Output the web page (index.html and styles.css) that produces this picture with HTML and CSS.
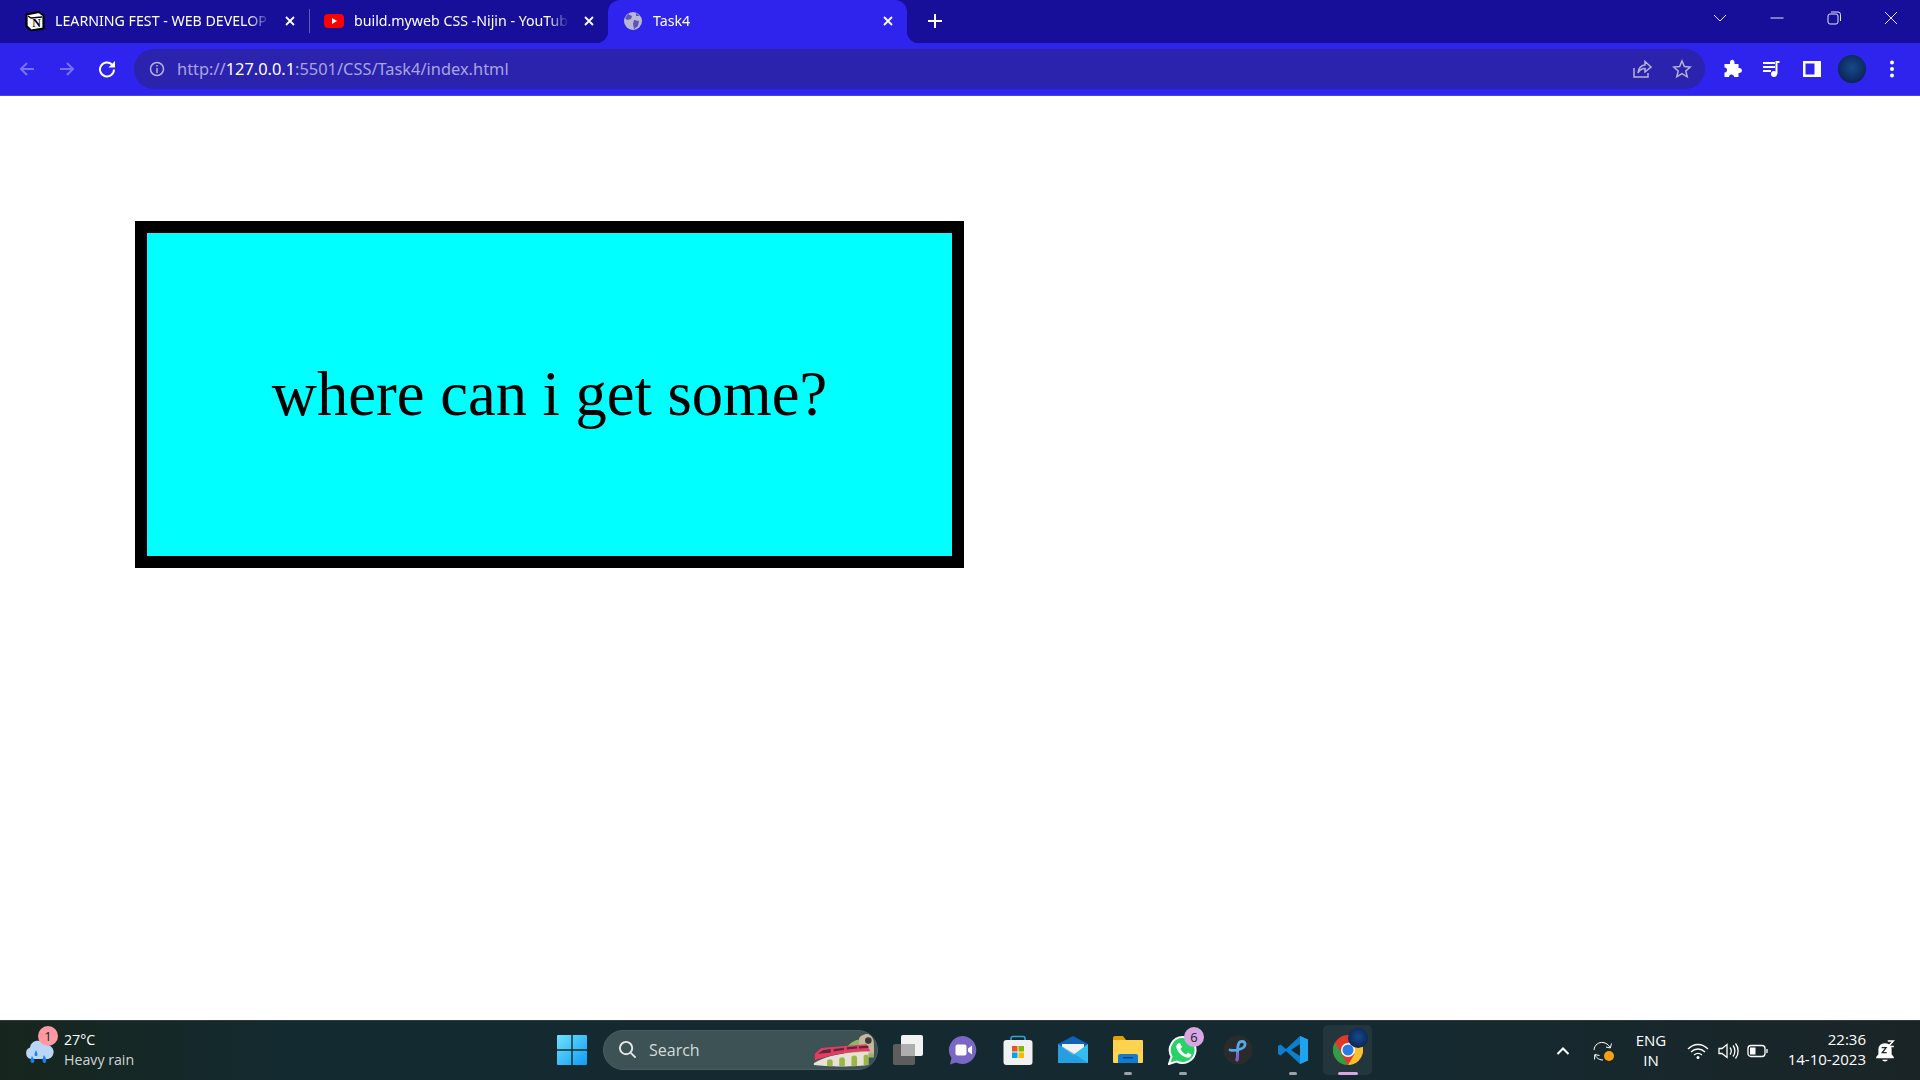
FILE: index.html
```html
<!DOCTYPE html>
<html lang="en">
<head>
    <meta charset="UTF-8">
    <title>Task4</title>
    <link rel="stylesheet" href="styles.css">
</head>
<body>
    <div class="tabstrip">
        <div class="tab">
            <svg class="favicon" viewBox="0 0 20 20"><path d="M1.500 3.500 14 1 18.500 4.500V17.500L6 19.500 1.500 15Z" fill="#fff" stroke="#000" stroke-width="2.200" stroke-linejoin="round"/><path d="M3 5 6 7 17 6" fill="none" stroke="#000" stroke-width="1.300"/><text class="notion-n" x="11.500" y="16" text-anchor="middle">N</text></svg>
            <span class="tab-title">LEARNING FEST - WEB DEVELOP</span>
            <svg class="tab-close" viewBox="0 0 12 12"><path d="M2 2 10 10M10 2 2 10"/></svg>
        </div>
        <div class="tab tab-sep">
            <svg class="favicon" viewBox="0 0 20 20"><rect x="0" y="3" width="20" height="14" rx="4" fill="#f00"/><path d="M8 7 13 10 8 13Z" fill="#fff"/></svg>
            <span class="tab-title">build.myweb CSS -Nijin - YouTub</span>
            <svg class="tab-close" viewBox="0 0 12 12"><path d="M2 2 10 10M10 2 2 10"/></svg>
        </div>
        <div class="tab active">
            <svg class="favicon" viewBox="0 0 20 20"><circle cx="10" cy="10" r="9" fill="#b9b7d6"/><path d="M5 3 9 5 8 8 4 9 2 7ZM11 9 16 10 15 15 11 18 10 13ZM13 2 17 5 13 5Z" fill="#5b55b8"/></svg>
            <span class="tab-title">Task4</span>
            <svg class="tab-close" viewBox="0 0 12 12"><path d="M2 2 10 10M10 2 2 10"/></svg>
        </div>
        <svg class="new-tab" viewBox="0 0 16 16"><path d="M8 1V15M1 8H15"/></svg>
        <div class="window-controls">
            <svg class="win-btn" viewBox="0 0 16 16"><path d="M2 5 8 11 14 5"/></svg>
            <svg class="win-btn" viewBox="0 0 16 16"><path d="M1.500 8H14.500"/></svg>
            <svg class="win-btn" viewBox="0 0 16 16"><rect x="2" y="4" width="10" height="10" rx="2"/><path d="M5 2H12A2.500 2.500 0 0 1 14.500 4.500V11"/></svg>
            <svg class="win-btn" viewBox="0 0 16 16"><path d="M2 2 14 14M14 2 2 14"/></svg>
        </div>
    </div>

    <div class="toolbar">
        <svg class="nav-icon dim" viewBox="0 0 18 18"><path d="M16 9H3M9 3 3 9 9 15"/></svg>
        <svg class="nav-icon dim" viewBox="0 0 18 18"><path d="M2 9H15M9 3 15 9 9 15"/></svg>
        <svg class="nav-icon" viewBox="0 0 18 18"><path d="M16 9.500A7 7 0 1 1 13.900 4.500"/><path class="solid" d="M17 1V7.500H10.500Z"/></svg>
        <div class="omnibox">
            <svg class="info-icon" viewBox="0 0 16 16"><circle cx="8" cy="8" r="6.500"/><path d="M8 7V12M8 4V5.600"/></svg>
            <span class="url">http://<b>127.0.0.1</b>:5501/CSS/Task4/index.html</span>
            <svg class="omni-icon" viewBox="0 0 20 20"><path d="M2 9V18H16V14"/><path d="M6 14C6 9 10 6 13 6V2.500L19 8 13 13V9.500C10 9.500 7.500 11 6 14Z"/></svg>
            <svg class="omni-icon" viewBox="0 0 20 20"><path d="M10 2 12.400 7.500 18.300 8 13.800 12 15.200 17.800 10 14.700 4.800 17.800 6.200 12 1.700 8 7.600 7.500Z"/></svg>
        </div>
        <div class="toolbar-actions">
            <svg class="tool-icon" viewBox="0 0 20 20"><path class="solid" d="M8 2.500A2.300 2.300 0 0 1 12.500 3V5H16.500V9H17.500A2.400 2.400 0 0 1 17.500 14H16.500V18H12A2.500 2.500 0 0 0 7 18H2.500V13.500A2.500 2.500 0 0 0 2.500 8.500V5H8Z"/></svg>
            <svg class="tool-icon" viewBox="0 0 20 20"><path d="M1 4H13M1 8H13M1 12H9"/><path d="M17.500 3H14.500V15"/><circle class="solid" cx="12" cy="15" r="3"/></svg>
            <svg class="tool-icon" viewBox="0 0 20 20"><path class="solid" fill-rule="evenodd" d="M1 2H19V18H1ZM3.500 4.500V15.500H12.500V4.500Z"/></svg>
            <div class="avatar"></div>
            <svg class="tool-icon" viewBox="0 0 20 20"><circle class="solid" cx="10" cy="3.500" r="2"/><circle class="solid" cx="10" cy="10" r="2"/><circle class="solid" cx="10" cy="16.500" r="2"/></svg>
        </div>
    </div>

    <main class="page">
        <div class="box">where can i get some?</div>
    </main>

    <div class="taskbar">
        <div class="weather">
            <div class="weather-icon">
                <svg viewBox="0 0 32 32"><path d="M8 24A6 6 0 0 1 7 12.500 8 8 0 0 1 22 10 7 7 0 0 1 25 24Z" fill="#b9d6f7"/><path d="M13 15C11 19 11 21 13 21 15 21 15 19 13 15ZM9 21C7 25 7 28 9.500 28 12 28 12 25 9 21ZM21 20C19 24 19 28 21.500 28 24 28 24 24 21 20Z" fill="#1d83f0"/></svg>
                <span class="weather-badge">1</span>
            </div>
            <div class="weather-text">
                <span class="temp">27°C</span>
                <span class="cond">Heavy rain</span>
            </div>
        </div>

        <div class="task-center">
            <div class="cell">
                <svg class="app" viewBox="0 0 30 30"><defs><linearGradient id="win" x1="0" y1="0" x2="1" y2="1"><stop offset="0" stop-color="#6fe3fb"/><stop offset="1" stop-color="#0f9bf5"/></linearGradient></defs><path d="M0 1A1 1 0 0 1 1 0H14.300V14.300H0ZM15.700 0H29A1 1 0 0 1 30 1V14.300H15.700ZM0 15.700H14.300V30H1A1 1 0 0 1 0 29ZM15.700 15.700H30V29A1 1 0 0 1 29 30H15.700Z" fill="url(#win)"/></svg>
            </div>
            <div class="search">
                <svg class="search-icon" viewBox="0 0 20 20"><circle cx="8.500" cy="8.500" r="6.500"/><path d="M13.500 13.500 18.500 18.500"/></svg>
                <span class="search-text">Search</span>
                <svg class="search-art" viewBox="0 0 66 36"><path d="M34 20C40 8 50 6 52 7L58 1C63 0 66 6 66 14V26H34Z" fill="#8fb56a"/><path d="M50 22V6C52 1 60 0 63 2 66 6 66 12 66 22Z" fill="#c9b49e"/><circle cx="60" cy="8" r="3.500" fill="#3a3a3a"/><path d="M2 32C10 26 30 20 60 20V34C50 36 14 36 2 34Z" fill="#e6e2d8"/><path d="M3 22 10 16 58 12 62 19C42 19 20 23 3 29Z" fill="#e63c64"/><path d="M6 22 12 18 20 17 20 21ZM23 17 34 15.500 34 18 23 19.500ZM37 15 48 14 48 16.500 37 17.500ZM50 14 60 13.500 60 16 50 16.500Z" fill="#5b2a3c"/><path d="M16 35V30C16 27 22 27 22 30V35ZM29 35V28C29 25 35 25 35 28V35ZM42 35V26C42 23 48 23 48 26V35ZM55 34V25C55 22 60 22 60 25V34Z" fill="#9bb546"/></svg>
            </div>
            <div class="cell">
                <svg class="app" viewBox="0 0 30 30"><rect x="0" y="9" width="22" height="21" rx="2" fill="#5d5d5d"/><rect x="8" y="0" width="22" height="21" rx="2" fill="#f2f2f2"/><rect x="8" y="9" width="14" height="12" fill="#aeaeae"/></svg>
            </div>
            <div class="cell">
                <svg class="app" viewBox="0 0 30 30"><path d="M15 1A14 14 0 1 1 8 27.500L2 29.500 3.500 23A14 14 0 0 1 15 1Z" fill="#7a68c4"/><rect x="7.500" y="9.500" width="11" height="11" rx="2" fill="#fff"/><path d="M20 13.500 24 10.500V19.500L20 16.500Z" fill="#fff"/></svg>
            </div>
            <div class="cell">
                <svg class="app" viewBox="0 0 30 30"><path d="M8 7V3.500A2 2 0 0 1 10 1.500H20A2 2 0 0 1 22 3.500V7" fill="none" stroke="#28a8e0" stroke-width="1.500"/><rect x="0.500" y="5" width="29" height="25" rx="3" fill="#f1f1f1"/><rect x="9" y="11" width="5.500" height="5.500" fill="#f25022"/><rect x="15.500" y="11" width="5.500" height="5.500" fill="#7fba00"/><rect x="9" y="17.500" width="5.500" height="5.500" fill="#00a4ef"/><rect x="15.500" y="17.500" width="5.500" height="5.500" fill="#ffb900"/></svg>
            </div>
            <div class="cell">
                <svg class="app" viewBox="0 0 30 30"><path d="M0 9 15 1 30 9V28H0Z" fill="#0f62b5"/><path d="M4 9H26V17L15 22 4 17Z" fill="#f1f1f1"/><path d="M0 9 15 20 30 9V28H0Z" fill="#35bdf0"/><path d="M0 28 30 28 15 18 0 9Z" fill="#1a8bd8" opacity="0.600"/></svg>
            </div>
            <div class="cell">
                <svg class="app" viewBox="0 0 30 30"><path d="M0 3A2 2 0 0 1 2 1H10L13 5H0Z" fill="#e0a100"/><path d="M0 5H29A1 1 0 0 1 30 6V27A1 1 0 0 1 29 28H1A1 1 0 0 1 0 27Z" fill="#ffd34f"/><path d="M5 21A2 2 0 0 1 7 19H23A2 2 0 0 1 25 21V28H5Z" fill="#0f7cd0"/><rect x="10" y="22" width="10" height="1.500" fill="#073e78"/></svg>
                <span class="dot"></span>
            </div>
            <div class="cell">
                <svg class="app" viewBox="0 0 30 30"><path d="M15 2A13 13 0 1 1 8.500 26.500L1 29 3.500 21.500A13 13 0 0 1 15 2Z" fill="#25d366" stroke="#fff" stroke-width="2"/><path d="M10 8.500 12 8 14 12 12.500 14C14 17 16 18.500 18 19.500L20 17.500 23.500 19.500C23 22.500 20.500 23 18.500 22.500 13.500 21 9.500 17 8.500 13 8 11 8.500 9.500 10 8.500Z" fill="#fff"/></svg>
                <span class="app-badge">6</span>
                <span class="dot"></span>
            </div>
            <div class="cell">
                <svg class="app" viewBox="0 0 30 30"><circle cx="15" cy="15" r="14.500" fill="#2b2b2b"/><path d="M7 15C10 16 21 15 22 10 23 6 17 5 15.500 9 14 13 15 20 14 25" fill="none" stroke="#5aa6e6" stroke-width="2.800" stroke-linecap="round"/><path d="M14.800 19C14.700 21 14.500 23 14 25" fill="none" stroke="#8a5cd0" stroke-width="2.800" stroke-linecap="round"/></svg>
            </div>
            <div class="cell">
                <svg class="app" viewBox="0 0 30 30"><path d="M22 1 30 4.500V25.500L22 29 8 16 2.500 20.500 0 19V11L2.500 9.500 8 14ZM22 9 13 15 22 21Z" fill="#0d7fcc"/><path d="M22 1 30 4.500V25.500L22 29Z" fill="#20a3ee"/></svg>
                <span class="dot"></span>
            </div>
            <div class="cell cell-active">
                <svg class="app" viewBox="0 0 30 30"><circle cx="15" cy="15" r="15" fill="#e0392c"/><path d="M15 30A15 15 0 0 0 28 7.500H15L21.500 19Z" fill="#fbc02d"/><path d="M2 7.500 8.500 19 15 30A15 15 0 0 1 2 7.500Z" fill="#2f9e44"/><circle cx="15" cy="15" r="7" fill="#fff"/><circle cx="15" cy="15" r="5.500" fill="#2a7be8"/></svg>
                <span class="chrome-avatar"></span>
                <span class="bar"></span>
            </div>
        </div>

        <div class="tray">
            <svg class="caret" viewBox="0 0 14 10"><path d="M1.500 8 7 2.500 12.500 8"/></svg>
            <div class="sync">
                <svg viewBox="0 0 20 20"><path d="M1 9C1.500 3.500 6 1 10 1.500 13 2 15.500 3.500 17 6.500M18.500 2.500 17.300 7 13 6M2 14C4 18 7.500 19 10 19M1.500 18.500 1.800 13.500 6.500 14.500" fill="none" stroke="#fff" stroke-width="1"/></svg>
                <span class="sync-dot"></span>
            </div>
            <div class="lang">ENG<br>IN</div>
            <svg class="tray-icon" viewBox="0 0 22 18"><path d="M1 7C7 1 15 1 21 7M4 10C8 6 14 6 18 10M7 13C9.500 11 12.500 11 15 13"/><circle class="solid" cx="11" cy="15.500" r="1.500"/></svg>
            <svg class="tray-icon" viewBox="0 0 22 18"><path d="M2 6.500H5L10 2.500V15.500L5 11.500H2ZM13 5.500C14.500 7.500 14.500 10.500 13 12.500M16 3.500C18.500 6.500 18.500 11.500 16 14.500M18.500 1.500C22 5.500 22 12.500 18.500 16.500"/></svg>
            <svg class="tray-icon" viewBox="0 0 22 18"><rect x="1" y="3.500" width="17" height="11" rx="3"/><rect class="solid" x="3" y="5.500" width="5.500" height="7"/><path d="M20 7V11"/></svg>
            <div class="clock">22:36<br>14-10-2023</div>
            <svg class="bell" viewBox="0 0 20 20"><path class="solid" d="M10 3A5.500 5.500 0 0 0 4 8.500V13L2 15.500V16.500H18V15.500L16 13V8.500A5.500 5.500 0 0 0 10 3ZM7.500 18H12.500C12 20 8 20 7.500 18Z"/><path d="M7 7H11L7.500 11.500H11.500" fill="none" stroke="#16262a" stroke-width="1.200"/><path d="M12.500 1H17.500L13 6H18" fill="none" stroke="#fff" stroke-width="1.400"/></svg>
        </div>
    </div>
</body>
</html>
```

FILE: styles.css
```css
* {
    box-sizing: border-box;
}
body {
    margin: 0;
    width: 1920px;
    height: 1080px;
    overflow: hidden;
    display: flex;
    flex-direction: column;
    font-family: "Noto Sans", "Open Sans", sans-serif;
    background: white;
}

/* tabs */
.tabstrip {
    height: 43px;
    flex-shrink: 0;
    display: flex;
    align-items: stretch;
    padding-left: 10px;
    background: #170f9a;
    color: white;
}
.tab {
    position: relative;
    width: 299px;
    display: flex;
    align-items: center;
    padding: 0 13px 2px 15px;
    font-size: 14.200px;
}
.tab-sep::before {
    content: "";
    position: absolute;
    left: 0;
    top: 9px;
    height: 24px;
    width: 1px;
    background: #5d59b5;
}
.tab.active {
    background: #2f24ee;
    border-radius: 12px 12px 0 0;
}
.tab.active::before,
.tab.active::after {
    content: "";
    position: absolute;
    bottom: 0;
    width: 12px;
    height: 12px;
}
.tab.active::before {
    left: -12px;
    background: radial-gradient(circle at 0 0, #170f9a 12px, #2f24ee 12.500px);
}
.tab.active::after {
    right: -12px;
    background: radial-gradient(circle at 100% 0, #170f9a 12px, #2f24ee 12.500px);
}
.favicon {
    width: 20px;
    height: 20px;
    flex-shrink: 0;
    margin-right: 10px;
}
.notion-n {
    font-family: "Liberation Serif", serif;
    font-weight: bold;
    font-size: 12px;
    fill: #000;
}
.tab-title {
    flex: 1;
    white-space: nowrap;
    overflow: hidden;
    -webkit-mask-image: linear-gradient(to right, black 90%, transparent 100%);
    mask-image: linear-gradient(to right, black 90%, transparent 100%);
}
.tab-close {
    width: 12px;
    height: 12px;
    margin-left: 14px;
    flex-shrink: 0;
    fill: none;
    stroke: white;
    stroke-width: 1.800;
}
.new-tab {
    width: 16px;
    height: 16px;
    margin: 13px 0 0 20px;
    fill: none;
    stroke: white;
    stroke-width: 2;
}
.window-controls {
    margin-left: auto;
    display: flex;
    align-items: flex-start;
    gap: 41px;
    padding: 10px 21px 0 0;
}
.win-btn {
    width: 16px;
    height: 16px;
    fill: none;
    stroke: #e6e6f5;
    stroke-width: 1;
}

/* address bar */
.toolbar {
    height: 53px;
    flex-shrink: 0;
    display: flex;
    align-items: center;
    padding: 0 8px 1px 18px;
    background: #2f24ee;
    border-bottom: 1px solid #4a40f0;
}
.nav-icon {
    width: 18px;
    height: 18px;
    margin-right: 22px;
    flex-shrink: 0;
    fill: none;
    stroke: white;
    stroke-width: 2;
}
.nav-icon.dim {
    stroke: #7a72f4;
}
.nav-icon .solid {
    fill: white;
    stroke: none;
}
.omnibox {
    width: 1571px;
    height: 40px;
    margin-left: -4px;
    flex-shrink: 0;
    display: flex;
    align-items: center;
    padding: 0 13px 0 15px;
    border-radius: 20px;
    background: #2b22ae;
}
.info-icon {
    width: 16px;
    height: 16px;
    flex-shrink: 0;
    fill: none;
    stroke: #b5b3d8;
    stroke-width: 1.500;
}
.url {
    flex: 1;
    margin-left: 12px;
    font-size: 16.400px;
    color: #a9a5e2;
}
.url b {
    font-weight: normal;
    color: white;
}
.omni-icon {
    width: 20px;
    height: 20px;
    margin-left: 20px;
    fill: none;
    stroke: #b5b3d8;
    stroke-width: 1.500;
}
.toolbar-actions {
    flex: 1;
    display: grid;
    grid-template-columns: repeat(5, 1fr);
    justify-items: center;
    align-items: center;
    padding-left: 7px;
}
.tool-icon {
    width: 20px;
    height: 20px;
    fill: none;
    stroke: white;
    stroke-width: 2;
}
.tool-icon .solid {
    fill: white;
    stroke: none;
}
.avatar {
    width: 28px;
    height: 28px;
    border-radius: 50%;
    background: radial-gradient(circle at 50% 45%, #164a8c 0%, #0d2f66 55%, #071533 100%);
}

/* page content */
.page {
    flex: 1;
    padding: 125px 0 0 135px;
}
.box {
    width: 829px;
    height: 347px;
    display: flex;
    align-items: center;
    justify-content: center;
    border: 12px solid black;
    background: cyan;
    color: black;
    font-family: "Liberation Serif", "Times New Roman", serif;
    font-size: 62.500px;
}

/* windows taskbar */
.taskbar {
    position: relative;
    height: 60px;
    flex-shrink: 0;
    display: flex;
    align-items: center;
    border-top: 1px solid #2c3c40;
    background: linear-gradient(to right, #17261d 0%, #132a30 15%, #152a30 75%, #1a2426 100%);
    color: white;
    font-family: "Open Sans", "Noto Sans", sans-serif;
}
.weather {
    width: 544px;
    flex-shrink: 0;
    display: flex;
    align-items: center;
    padding-left: 23px;
}
.weather-icon {
    position: relative;
    width: 32px;
    height: 32px;
    margin-right: 9px;
}
.weather-badge {
    position: absolute;
    top: -9px;
    left: 15px;
    width: 20px;
    height: 20px;
    border-radius: 50%;
    background: #ff99a4;
    color: #222;
    font-size: 13px;
    line-height: 20px;
    text-align: center;
}
.weather-text {
    display: flex;
    flex-direction: column;
    font-size: 14.200px;
    line-height: 20px;
    margin-top: -2px;
}
.cond {
    color: #cfd6d8;
}
.task-center {
    display: flex;
    align-items: center;
    margin-top: -2px;
}
.cell {
    position: relative;
    width: 55px;
    height: 50px;
    display: flex;
    align-items: center;
    justify-content: center;
}
.cell-active {
    border-radius: 5px;
    background: #22363b;
    width: 49px;
    margin-left: 3px;
}
.app {
    width: 30px;
    height: 30px;
}
.dot {
    position: absolute;
    left: 24px;
    bottom: 0;
    width: 8px;
    height: 3px;
    border-radius: 2px;
    background: #9aa4a6;
}
.bar {
    position: absolute;
    left: 15px;
    bottom: 0;
    width: 20px;
    height: 3px;
    border-radius: 2px;
    background: #d9a6e4;
}
.app-badge {
    position: absolute;
    top: 2px;
    left: 29px;
    width: 20px;
    height: 20px;
    border-radius: 50%;
    background: #d9a6e4;
    color: #222;
    font-size: 13px;
    line-height: 20px;
    text-align: center;
}
.chrome-avatar {
    position: absolute;
    top: 3px;
    left: 25px;
    width: 20px;
    height: 20px;
    border-radius: 50%;
    background: radial-gradient(circle at 50% 45%, #164a8c 0%, #0d2f66 55%, #071533 100%);
}
.search {
    width: 275px;
    height: 40px;
    margin: 0 2px 0 4px;
    display: flex;
    align-items: center;
    padding: 0 3px 0 14px;
    border: 1px solid #4a5e60;
    border-radius: 20px;
    background: #3d5254;
    overflow: hidden;
}
.search-icon {
    width: 19px;
    height: 19px;
    flex-shrink: 0;
    fill: none;
    stroke: #e4e8e8;
    stroke-width: 2;
}
.search-text {
    flex: 1;
    margin-left: 12px;
    font-size: 16px;
    color: #d4dadb;
}
.search-art {
    width: 62px;
    height: 36px;
}
.tray {
    position: absolute;
    top: 0;
    right: 0;
    height: 100%;
    display: flex;
    align-items: center;
}
.caret {
    width: 14px;
    height: 10px;
    fill: none;
    stroke: white;
    stroke-width: 2;
}
.sync {
    position: relative;
    width: 20px;
    height: 20px;
    margin-left: 23px;
}
.sync-dot {
    position: absolute;
    right: -1px;
    bottom: 0;
    width: 10px;
    height: 10px;
    border-radius: 50%;
    background: #f7a010;
}
.lang {
    width: 40px;
    margin: -2px 16px 0 18px;
    text-align: center;
    font-size: 15px;
    line-height: 20px;
}
.tray-icon {
    width: 22px;
    height: 18px;
    margin-right: 8px;
    fill: none;
    stroke: white;
    stroke-width: 1.300;
}
.tray-icon .solid {
    fill: white;
    stroke: none;
}
.clock {
    width: 87px;
    margin: -4px 0 0 2px;
    text-align: right;
    font-size: 15px;
    line-height: 20px;
}
.bell {
    width: 22px;
    height: 22px;
    margin: 0 24px 0 8px;
    fill: none;
}
.bell .solid {
    fill: white;
}
```
